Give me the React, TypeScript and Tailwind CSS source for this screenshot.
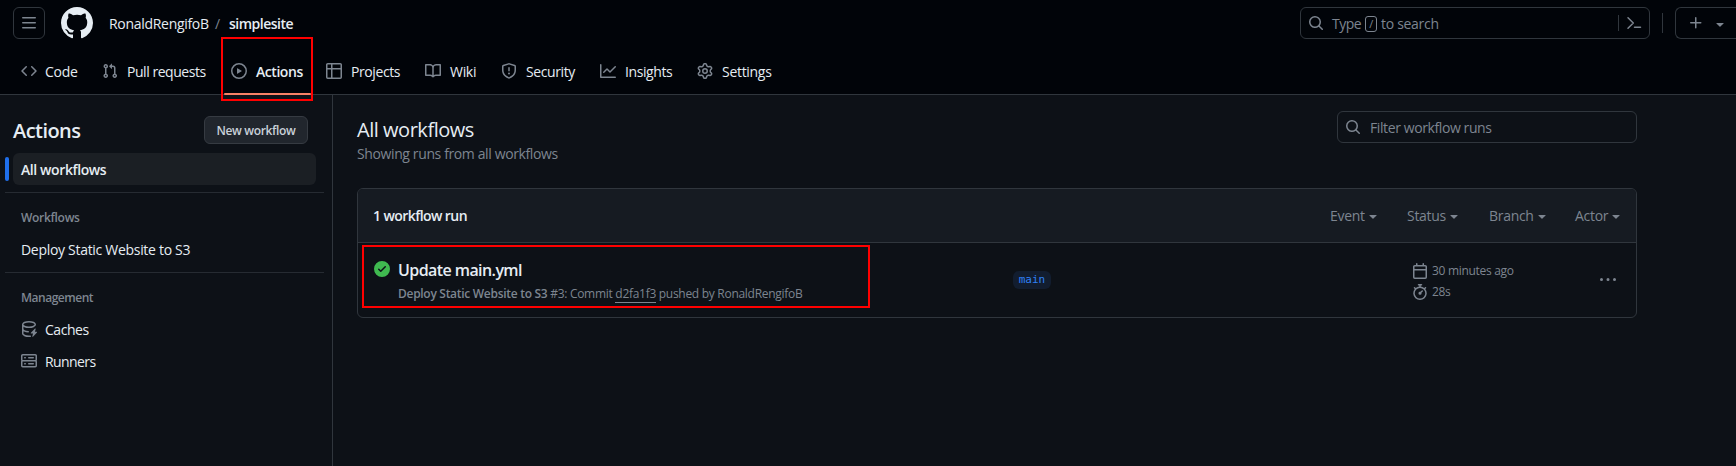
import React from "react";

const P = {
  bars: "M1 2.75A.75.75 0 0 1 1.75 2h12.5a.75.75 0 0 1 0 1.5H1.75A.75.75 0 0 1 1 2.75Zm0 5A.75.75 0 0 1 1.75 7h12.5a.75.75 0 0 1 0 1.5H1.75A.75.75 0 0 1 1 7.75ZM1.75 12h12.5a.75.75 0 0 1 0 1.5H1.75a.75.75 0 0 1 0-1.5Z",
  github: "M8 0c4.42 0 8 3.58 8 8a8.013 8.013 0 0 1-5.45 7.59c-.4.08-.55-.17-.55-.38 0-.27.01-1.13.01-2.2 0-.75-.25-1.23-.54-1.48 1.78-.2 3.65-.88 3.65-3.95 0-.88-.31-1.59-.82-2.15.08-.2.36-1.02-.08-2.12 0 0-.67-.22-2.2.82-.64-.18-1.32-.27-2-.27-.68 0-1.36.09-2 .27-1.53-1.03-2.2-.82-2.2-.82-.44 1.1-.16 1.92-.08 2.12-.51.56-.82 1.28-.82 2.15 0 3.06 1.86 3.75 3.64 3.95-.23.2-.44.55-.51 1.07-.46.21-1.61.55-2.33-.66-.15-.24-.6-.83-1.23-.82-.67.01-.27.38.01.53.34.19.73.9.82 1.13.16.45.68 1.31 2.69.94 0 .67.01 1.3.01 1.49 0 .21-.15.45-.55.38A7.995 7.995 0 0 1 0 8c0-4.42 3.58-8 8-8Z",
  code: "m11.28 3.22 4.25 4.25a.75.75 0 0 1 0 1.06l-4.25 4.25a.749.749 0 0 1-1.275-.326.749.749 0 0 1 .215-.734L13.94 8l-3.72-3.72a.749.749 0 0 1 .326-1.275.749.749 0 0 1 .734.215Zm-6.56 0a.751.751 0 0 1 1.042.018.751.751 0 0 1 .018 1.042L2.06 8l3.72 3.72a.749.749 0 0 1-.326 1.275.749.749 0 0 1-.734-.215L.47 8.53a.75.75 0 0 1 0-1.06Z",
  pull: "M1.5 3.25a2.25 2.25 0 1 1 3 2.122v5.256a2.251 2.251 0 1 1-1.5 0V5.372A2.25 2.25 0 0 1 1.5 3.25Zm5.677-.177L9.573.677A.25.25 0 0 1 10 .854V2.5h1A2.5 2.5 0 0 1 13.5 5v5.628a2.251 2.251 0 1 1-1.5 0V5a1 1 0 0 0-1-1h-1v1.646a.25.25 0 0 1-.427.177L7.177 3.427a.25.25 0 0 1 0-.354ZM3.75 2.5a.75.75 0 1 0 0 1.5.75.75 0 0 0 0-1.5Zm0 9.5a.75.75 0 1 0 0 1.5.75.75 0 0 0 0-1.5Zm8.25.75a.75.75 0 1 0 1.5 0 .75.75 0 0 0-1.5 0Z",
  play: "M8 0a8 8 0 1 1 0 16A8 8 0 0 1 8 0ZM1.5 8a6.5 6.5 0 1 0 13 0 6.5 6.5 0 0 0-13 0Zm4.879-2.773 4.264 2.559a.25.25 0 0 1 0 .428l-4.264 2.559A.25.25 0 0 1 6 10.559V5.442a.25.25 0 0 1 .379-.215Z",
  table: "M0 1.75C0 .784.784 0 1.75 0h12.5C15.216 0 16 .784 16 1.75v12.5A1.75 1.75 0 0 1 14.25 16H1.75A1.75 1.75 0 0 1 0 14.25ZM6.5 6.5v8h7.75a.25.25 0 0 0 .25-.25V6.5Zm8-1.5V1.75a.25.25 0 0 0-.25-.25H6.5V5Zm-13 1.5v7.75c0 .138.112.25.25.25H5v-8ZM5 5V1.5H1.75a.25.25 0 0 0-.25.25V5Z",
  book: "M0 1.75A.75.75 0 0 1 .75 1h4.253c1.227 0 2.317.59 3 1.501A3.743 3.743 0 0 1 11.006 1h4.245a.75.75 0 0 1 .75.75v10.5a.75.75 0 0 1-.75.75h-4.507a2.25 2.25 0 0 0-1.591.659l-.622.621a.75.75 0 0 1-1.06 0l-.622-.621A2.25 2.25 0 0 0 5.258 13H.75a.75.75 0 0 1-.75-.75Zm7.251 10.324.004-5.073-.002-2.253A2.25 2.25 0 0 0 5.003 2.5H1.5v9h3.757a3.75 3.75 0 0 1 1.994.574ZM8.755 4.75l-.004 7.322a3.752 3.752 0 0 1 1.992-.572H14.5v-9h-3.495a2.25 2.25 0 0 0-2.25 2.25Z",
  shield: "M7.467.133a1.748 1.748 0 0 1 1.066 0l5.25 1.68A1.75 1.75 0 0 1 15 3.48V7c0 1.566-.32 3.182-1.303 4.682-.983 1.498-2.585 2.813-5.032 3.855a1.697 1.697 0 0 1-1.33 0c-2.447-1.042-4.049-2.357-5.032-3.855C1.32 10.182 1 8.566 1 7V3.48a1.75 1.75 0 0 1 1.217-1.667Zm.61 1.429a.25.25 0 0 0-.153 0l-5.25 1.68a.25.25 0 0 0-.174.238V7c0 1.358.275 2.666 1.057 3.86.784 1.194 2.121 2.34 4.366 3.297a.196.196 0 0 0 .154 0c2.245-.956 3.582-2.104 4.366-3.298C13.225 9.666 13.5 8.36 13.5 7V3.48a.251.251 0 0 0-.174-.237l-5.25-1.68ZM8.75 4.75v3a.75.75 0 0 1-1.5 0v-3a.75.75 0 0 1 1.5 0ZM9 10.5a1 1 0 1 1-2 0 1 1 0 0 1 2 0Z",
  graph: "M1.5 1.75V13.5h13.75a.75.75 0 0 1 0 1.5H.75a.75.75 0 0 1-.75-.75V1.75a.75.75 0 0 1 1.5 0Zm14.28 2.53-5.25 5.25a.75.75 0 0 1-1.06 0L7 7.06 4.28 9.78a.751.751 0 0 1-1.042-.018.751.751 0 0 1-.018-1.042l3.25-3.25a.75.75 0 0 1 1.06 0L10 7.94l4.72-4.72a.751.751 0 0 1 1.042.018.751.751 0 0 1 .018 1.042Z",
  gear: "M8 0a8.2 8.2 0 0 1 .701.031C9.444.095 9.99.645 10.16 1.29l.288 1.107c.018.066.079.158.212.224.231.114.454.243.668.386.123.082.233.09.299.071l1.103-.303c.644-.176 1.392.021 1.82.63.27.385.506.792.704 1.218.315.675.111 1.422-.364 1.891l-.814.806c-.049.048-.098.147-.088.294.016.257.016.515 0 .772-.01.147.038.246.088.294l.814.806c.475.469.679 1.216.364 1.891a7.977 7.977 0 0 1-.704 1.217c-.428.61-1.176.807-1.82.63l-1.102-.302c-.067-.019-.177-.011-.3.071a5.909 5.909 0 0 1-.668.386c-.133.066-.194.158-.211.224l-.29 1.106c-.168.646-.715 1.196-1.458 1.26a8.006 8.006 0 0 1-1.402 0c-.743-.064-1.289-.614-1.458-1.26l-.289-1.106c-.018-.066-.079-.158-.212-.224a5.738 5.738 0 0 1-.668-.386c-.123-.082-.233-.09-.299-.071l-1.103.303c-.644.176-1.392-.021-1.82-.63a8.12 8.12 0 0 1-.704-1.218c-.315-.675-.111-1.422.363-1.891l.815-.806c.05-.048.098-.147.088-.294a6.214 6.214 0 0 1 0-.772c.01-.147-.038-.246-.088-.294l-.815-.806C.635 6.045.431 5.298.746 4.623a7.92 7.92 0 0 1 .704-1.217c.428-.61 1.176-.807 1.82-.63l1.102.302c.067.019.177.011.3-.071.214-.143.437-.272.668-.386.133-.066.194-.158.211-.224l.29-1.106C6.009.645 6.556.095 7.299.03 7.53.01 7.764 0 8 0Zm-.571 1.525c-.036.003-.108.036-.137.146l-.289 1.105c-.147.561-.549.967-.998 1.189-.173.086-.34.183-.5.29-.417.278-.97.423-1.529.27l-1.103-.303c-.109-.03-.175.016-.195.045-.22.312-.412.644-.573.99-.014.031-.021.11.059.19l.815.806c.411.406.562.957.53 1.456a4.709 4.709 0 0 0 0 .582c.032.499-.119 1.05-.53 1.456l-.815.806c-.081.08-.073.159-.059.19.162.346.353.677.573.989.02.03.085.076.195.046l1.102-.303c.56-.153 1.113-.008 1.53.27.161.107.328.204.501.29.447.222.85.629.997 1.189l.289 1.105c.029.109.101.143.137.146a6.6 6.6 0 0 0 1.142 0c.036-.003.108-.036.137-.146l.289-1.105c.147-.561.549-.967.998-1.189.173-.086.34-.183.5-.29.417-.278.97-.423 1.529-.27l1.103.303c.109.029.175-.016.195-.045.22-.313.411-.644.573-.99.014-.031.021-.11-.059-.19l-.815-.806c-.411-.406-.562-.957-.53-1.456a4.709 4.709 0 0 0 0-.582c-.032-.499.119-1.05.53-1.456l.815-.806c.081-.08.073-.159.059-.19a6.464 6.464 0 0 0-.573-.989c-.02-.03-.085-.076-.195-.046l-1.102.303c-.56.153-1.113.008-1.53-.27a4.44 4.44 0 0 0-.501-.29c-.447-.222-.85-.629-.997-1.189l-.289-1.105c-.029-.11-.101-.143-.137-.146a6.6 6.6 0 0 0-1.142 0ZM11 8a3 3 0 1 1-6 0 3 3 0 0 1 6 0ZM9.5 8a1.5 1.5 0 1 0-3.001.001A1.5 1.5 0 0 0 9.5 8Z",
  search: "M10.68 11.74a6 6 0 0 1-7.922-8.982 6 6 0 0 1 8.982 7.922l3.04 3.04a.749.749 0 0 1-.326 1.275.749.749 0 0 1-.734-.215ZM11.5 7a4.499 4.499 0 1 0-8.997 0A4.499 4.499 0 0 0 11.5 7Z",
  down: "m4.427 7.427 3.396 3.396a.25.25 0 0 0 .354 0l3.396-3.396A.25.25 0 0 0 11.396 7H4.604a.25.25 0 0 0-.177.427Z",
  plus: "M7.75 2a.75.75 0 0 1 .75.75V7h4.25a.75.75 0 0 1 0 1.5H8.5v4.25a.75.75 0 0 1-1.5 0V8.5H2.75a.75.75 0 0 1 0-1.5H7V2.75A.75.75 0 0 1 7.75 2Z",
  calendar: "M4.75 0a.75.75 0 0 1 .75.75V2h5V.75a.75.75 0 0 1 1.5 0V2h1.25c.966 0 1.75.784 1.75 1.75v10.5A1.75 1.75 0 0 1 13.25 16H2.75A1.75 1.75 0 0 1 1 14.25V3.75C1 2.784 1.784 2 2.75 2H4V.75A.75.75 0 0 1 4.75 0ZM2.5 7.5v6.75c0 .138.112.25.25.25h10.5a.25.25 0 0 0 .25-.25V7.5Zm10.75-4H2.75a.25.25 0 0 0-.25.25V6h11V3.75a.25.25 0 0 0-.25-.25Z",
  stopwatch: "M5.75.75A.75.75 0 0 1 6.5 0h3a.75.75 0 0 1 0 1.5h-.75v1l-.001.041a6.724 6.724 0 0 1 3.464 1.435l.007-.006.75-.75a.749.749 0 0 1 1.275.326.749.749 0 0 1-.215.734l-.75.75-.006.007a6.75 6.75 0 1 1-10.548 0L2.72 5.03l-.75-.75a.751.751 0 0 1 .018-1.042.751.751 0 0 1 1.042-.018l.75.75.007.006A6.72 6.72 0 0 1 7.25 2.541V1.5H6.5a.75.75 0 0 1-.75-.75ZM8 14.5a5.25 5.25 0 1 0-.001-10.501A5.25 5.25 0 0 0 8 14.5Zm.389-6.7 1.33-1.33a.75.75 0 1 1 1.061 1.06L9.45 8.861A1.503 1.503 0 0 1 8 10.75a1.499 1.499 0 1 1 .389-2.95Z",
  check: "M8 16A8 8 0 1 1 8 0a8 8 0 0 1 0 16Zm3.78-9.72a.751.751 0 0 0-.018-1.042.751.751 0 0 0-1.042-.018L6.75 9.19 5.28 7.72a.751.751 0 0 0-1.042.018.751.751 0 0 0-.018 1.042l2 2a.75.75 0 0 0 1.06 0Z",
  kebab: "M8 9a1.5 1.5 0 1 0 0-3 1.5 1.5 0 0 0 0 3ZM1.5 9a1.5 1.5 0 1 0 0-3 1.5 1.5 0 0 0 0 3Zm13 0a1.5 1.5 0 1 0 0-3 1.5 1.5 0 0 0 0 3Z",
  cache: "M2.5 5.724V8c0 .248.238.7 1.169 1.159.874.43 2.144.745 3.62.822a.75.75 0 1 1-.078 1.498c-1.622-.085-3.102-.432-4.204-.975a5.565 5.565 0 0 1-.507-.28V12.5c0 .133.058.318.282.551.227.237.591.483 1.101.707 1.015.447 2.47.742 4.117.742.406 0 .802-.018 1.183-.052a.751.751 0 1 1 .134 1.494C8.89 15.98 8.45 16 8 16c-1.805 0-3.475-.32-4.721-.869-.623-.274-1.173-.619-1.579-1.041-.408-.425-.7-.964-.7-1.59v-9c0-.626.292-1.165.7-1.591.406-.42.956-.766 1.579-1.04C4.525.32 6.195 0 8 0c1.806 0 3.476.32 4.721.869.623.274 1.173.619 1.579 1.041.408.425.7.964.7 1.59 0 .626-.292 1.165-.7 1.591-.406.42-.956.766-1.578 1.04C11.475 6.68 9.805 7 8 7c-1.805 0-3.475-.32-4.721-.869a6.15 6.15 0 0 1-.779-.407Zm0-2.224c0 .133.058.318.282.551.227.237.591.483 1.101.707C4.898 5.205 6.353 5.5 8 5.5c1.646 0 3.101-.295 4.118-.742.508-.224.873-.471 1.1-.708.224-.232.282-.417.282-.55 0-.133-.058-.318-.282-.551-.227-.237-.591-.483-1.101-.707C11.102 1.795 9.647 1.5 8 1.5c-1.646 0-3.101.295-4.118.742-.508.224-.873.471-1.1.708-.224.232-.282.417-.282.55ZM14 7.6a.4.4 0 0 1 .68.4l-.75 2.75h1.75a.4.4 0 0 1 .28.68l-4 4.2a.4.4 0 0 1-.67-.38l.75-2.75h-1.9a.4.4 0 0 1-.28-.68Z",
  server: "M1.75 1h12.5c.966 0 1.75.784 1.75 1.75v4c0 .372-.116.717-.314 1 .198.283.314.628.314 1v4a1.75 1.75 0 0 1-1.75 1.75H1.75A1.75 1.75 0 0 1 0 12.75v-4c0-.358.109-.707.314-1a1.739 1.739 0 0 1-.314-1v-4C0 1.784.784 1 1.75 1ZM1.5 2.75v4c0 .138.112.25.25.25h12.5a.25.25 0 0 0 .25-.25v-4a.25.25 0 0 0-.25-.25H1.75a.25.25 0 0 0-.25.25Zm.25 5.75a.25.25 0 0 0-.25.25v4c0 .138.112.25.25.25h12.5a.25.25 0 0 0 .25-.25v-4a.25.25 0 0 0-.25-.25ZM7 4.75A.75.75 0 0 1 7.75 4h4.5a.75.75 0 0 1 0 1.5h-4.5A.75.75 0 0 1 7 4.75ZM7.75 10h4.5a.75.75 0 0 1 0 1.5h-4.5a.75.75 0 0 1 0-1.5ZM3 4.75A.75.75 0 0 1 3.75 4h.5a.75.75 0 0 1 0 1.5h-.5A.75.75 0 0 1 3 4.75ZM3.75 10h.5a.75.75 0 0 1 0 1.5h-.5a.75.75 0 0 1 0-1.5Z",
};

function Icon({ d, className = "size-4 text-[#7d8590]" }: { d: string; className?: string }) {
  return (
    <svg viewBox="0 0 16 16" fill="currentColor" fillRule="evenodd" className={"shrink-0 " + className}>
      <path d={d} />
    </svg>
  );
}

function CommandIcon() {
  return (
    <svg viewBox="0 0 16 16" fill="none" stroke="currentColor" strokeWidth="1.5" strokeLinecap="round" strokeLinejoin="round" className="size-4 shrink-0 text-[#7d8590]">
      <path d="M2 2.8 7.3 8 2 13.2M8.5 12.2h6" />
    </svg>
  );
}

const tabs = [
  { label: "Code", d: P.code, box: "w-[81px]", text: "" },
  { label: "Pull requests", d: P.pull, box: "w-[129px]", text: "ml-px tracking-[-0.46px]" },
  { label: "Actions", d: P.play, box: "w-[95px]", text: "ml-px font-semibold tracking-[-0.45px]" },
  { label: "Projects", d: P.table, box: "w-[99px]", text: "ml-px tracking-[-0.4px]" },
  { label: "Wiki", d: P.book, box: "w-[76px]", text: "ml-px" },
  { label: "Security", d: P.shield, box: "w-[99px]", text: "ml-px tracking-[-0.4px]" },
  { label: "Insights", d: P.graph, box: "w-[97px]", text: "ml-px tracking-[-0.4px]" },
  { label: "Settings", d: P.gear, box: "w-[100px]", text: "ml-px" },
];

const filters = [
  { label: "Event", box: "w-[77px]" },
  { label: "Status", box: "w-[82px]" },
  { label: "Branch", box: "w-[86px]" },
  { label: "Actor", box: "w-[46px]" },
];

export default function App() {
  return (
    <div className="flex h-[466px] w-[1736px] flex-col overflow-hidden bg-[#0d1117] font-['Open_Sans','Noto_Sans',sans-serif] text-[14px] leading-5 tracking-[-0.3px] text-[#e6edf3]">
      <header className="flex h-[95px] shrink-0 flex-col border-b border-[#30363d] bg-[#010409]">
        <div className="flex h-[46px] shrink-0 items-center pl-[13px]">
          <button className="flex size-8 items-center justify-center rounded-md border border-[#30363d]">
            <Icon d={P.bars} />
          </button>
          <Icon d={P.github} className="ml-4 size-8 text-[#e6edf3]" />
          <span className="ml-4 w-[99px] pt-0.5 whitespace-nowrap">RonaldRengifoB</span>
          <span className="ml-[7px] w-[14px] pt-0.5 text-[#7d8590]">/</span>
          <span className="pt-0.5 font-semibold tracking-[-0.5px]">simplesite</span>
          <div className="ml-auto flex h-8 w-[350px] items-center rounded-md border border-[#30363d] pl-[7px]">
            <Icon d={P.search} />
            <span className="ml-2 w-[29px] pt-px tracking-[-0.5px] text-[#7d8590]">Type</span>
            <span className="mx-1 mt-0.5 flex h-4 w-3 items-center justify-center rounded-[3px] border border-[#7d8590] text-[11px] text-[#7d8590]">/</span>
            <span className="pt-px text-[#7d8590]">to search</span>
            <span className="mr-[7px] ml-auto h-4 w-px bg-[#30363d]" />
            <CommandIcon />
            <span className="w-[7px]" />
          </div>
          <span className="mx-3 h-5 w-px bg-[#30363d]" />
          <div className="flex h-8 w-[61px] items-center rounded-l-md border border-r-0 border-[#30363d] pl-3">
            <Icon d={P.plus} />
            <Icon d={P.down} className="mt-0.5 ml-2 size-4 text-[#7d8590]" />
          </div>
        </div>
        <nav className="flex h-[49px] items-center pl-[21px]">
          {tabs.map((t) => (
            <a key={t.label} className={"flex h-[49px] shrink-0 items-center gap-2 whitespace-nowrap " + t.box}>
              <Icon d={t.d} />
              <span className={"pt-0.5 " + t.text}>{t.label}</span>
            </a>
          ))}
        </nav>
      </header>

      <div className="flex flex-1">
        <aside className="flex w-[333px] shrink-0 flex-col border-r border-[#30363d]">
          <div className="mt-[21px] flex h-7 items-center justify-between pr-6 pl-[13px]">
            <h2 className="pt-0.5 text-[20px] font-semibold tracking-[-0.55px]">Actions</h2>
            <button className="flex h-7 w-[104px] items-center justify-center rounded-md border border-[#363b42] bg-[#21262d] pt-px text-[12px] font-semibold tracking-[-0.35px] text-[#c9d1d9]">New workflow</button>
          </div>
          <div className="mt-[9px] flex items-center pl-[5px]">
            <span className="h-6 w-1 rounded-md bg-[#1f6feb]" />
            <span className="ml-1 flex h-8 w-[303px] items-center rounded-md bg-[#1b1f24] pt-px pl-2 font-semibold tracking-[-0.4px]">All workflows</span>
          </div>
          <div className="mt-[7px] ml-[5px] h-px w-[319px] bg-[#262b32]" />
          <h3 className="mt-[15px] pl-[21px] text-[12px] font-semibold text-[#7d8590]">Workflows</h3>
          <span className="mt-[12px] pl-[21px]">Deploy Static Website to S3</span>
          <div className="mt-[12px] ml-[5px] h-px w-[319px] bg-[#262b32]" />
          <h3 className="mt-[15px] pl-[21px] text-[12px] font-semibold tracking-[-0.48px] text-[#7d8590]">Management</h3>
          <div className="mt-[11px] flex h-5 items-center gap-2 pl-[21px] tracking-[-0.45px]">
            <Icon d={P.cache} />
            <span className="pt-px">Caches</span>
          </div>
          <div className="mt-[12px] flex h-5 items-center gap-2 pl-[21px] tracking-[-0.6px]">
            <Icon d={P.server} />
            <span className="pt-px">Runners</span>
          </div>
        </aside>

        <main className="flex flex-col pl-6">
          <div className="flex h-[93px] w-[1280px] justify-between">
            <div className="flex flex-col pt-[20px]">
              <h1 className="text-[20px] leading-[29px] tracking-[-0.47px]">All workflows</h1>
              <p className="tracking-[-0.38px] text-[#7d8590]">Showing runs from all workflows</p>
            </div>
            <div className="mt-4 flex h-8 w-[300px] items-center gap-[9px] rounded-md border border-[#30363d] pl-[7px] tracking-[-0.4px] text-[#7d8590]">
              <Icon d={P.search} />
              <span className="pt-px">Filter workflow runs</span>
            </div>
          </div>
          <section className="flex h-[130px] w-[1280px] flex-col overflow-hidden rounded-md border border-[#30363d]">
            <div className="flex h-[54px] shrink-0 items-center border-b border-[#30363d] bg-[#161b22] pl-[15px]">
              <h4 className="pt-px font-semibold tracking-[-0.58px]">1 workflow run</h4>
              <div className="mr-[15px] ml-auto flex pt-px text-[#7d8590]">
                {filters.map((f) => (
                  <span key={f.label} className={"flex items-center whitespace-nowrap " + f.box}>
                    {f.label}
                    <Icon d={P.down} className="size-4 text-[#7d8590]" />
                  </span>
                ))}
              </div>
            </div>
            <div className="flex flex-1">
              <div className="flex w-[655px] gap-2 pt-[17px] pl-4">
                <Icon d={P.check} className="mt-[1px] size-4 text-[#3fb950]" />
                <div className="flex flex-col">
                  <span className="text-[16px] font-semibold tracking-[-0.58px]">Update main.yml</span>
                  <span className="mt-[5px] text-[12px] leading-[18px] tracking-[-0.29px] text-[#7d8590]">
                    <b className="font-semibold">Deploy Static Website to S3</b> #3: Commit{" "}
                    <span className="border-b border-[#7d8590]">d2fa1f3</span> pushed by RonaldRengifoB
                  </span>
                </div>
              </div>
              <div className="flex w-[399px] items-center">
                <span className="flex h-[18px] w-[38px] items-center justify-center rounded-md bg-[#121d2f] font-['DejaVu_Sans_Mono',monospace] text-[11px] tracking-normal text-[#2f81f7]">main</span>
              </div>
              <div className="flex flex-1 flex-col gap-px pt-[18px] text-[12px] text-[#7d8590]">
                <span className="flex h-5 items-center gap-1"><Icon d={P.calendar} />30 minutes ago</span>
                <span className="flex h-5 items-center gap-1"><Icon d={P.stopwatch} />28s</span>
              </div>
              <div className="flex items-center pr-5"><Icon d={P.kebab} /></div>
            </div>
          </section>
        </main>
      </div>

      <div className="absolute top-[37px] left-[221px] h-[64px] w-[92px] border-2 border-[#ff0000]" />
      <div className="absolute top-[93px] left-[224px] h-[2px] w-[87px] rounded-md bg-[#f78166]" />
      <div className="absolute top-[245px] left-[362px] h-[63px] w-[508px] border-2 border-[#ff0000]" />
    </div>
  );
}
